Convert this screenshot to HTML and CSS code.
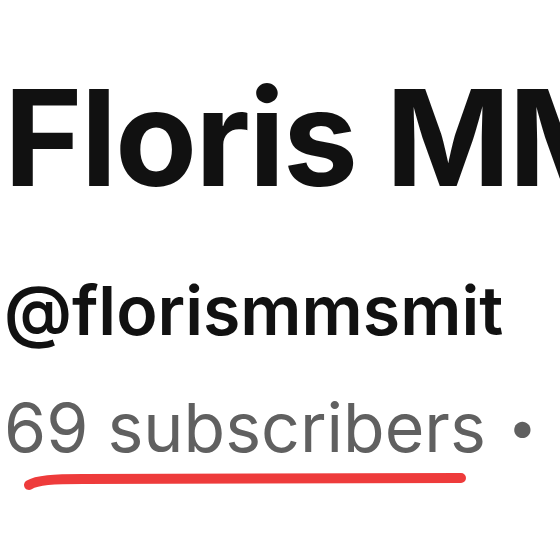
FILE: index.html
```html
<!DOCTYPE html>
<html>
<head>
<meta charset="utf-8">
<link rel="stylesheet" href="styles.css">
</head>
<body>
<div class="header">
  <h1 class="name">Floris MMS Smit</h1>
  <div class="handle">@florismmsmit</div>
  <div class="meta">
    <span class="subs">69 subscribers<svg class="underline" viewBox="0 0 450 20" width="450" height="20"><path d="M6 13 C 14 8, 30 7, 60 7 L 438 6" stroke="#ee3b3b" stroke-width="10" stroke-linecap="round" fill="none"/></svg></span>
    <span class="dot">•</span>
    <span class="videos">1 video</span>
  </div>
</div>
</body>
</html>
```
FILE: styles.css
```css
html, body {
  margin: 0;
  padding: 0;
  background: #fff;
  overflow: hidden;
}
.header {
  width: 560px;
  height: 560px;
  overflow: hidden;
  padding: 0 0 0 4px;
  box-sizing: border-box;
  font-family: Inter, "Liberation Sans", sans-serif;
}
.name {
  margin: 0;
  padding-top: 62px;
  font-size: 134px;
  font-weight: 700;
  line-height: 150px;
  color: #111;
  white-space: nowrap;
  letter-spacing: -2px;
}
.handle {
  margin-top: 58px;
  font-size: 68px;
  font-weight: 600;
  line-height: 80px;
  color: #111;
  white-space: nowrap;
  letter-spacing: 0;
}
.meta {
  margin-top: 37px;
  font-size: 68px;
  font-weight: 400;
  line-height: 80px;
  color: #606060;
  white-space: nowrap;
  display: flex;
  gap: 22px;
}
.subs {
  position: relative;
}
.dot {
  font-size: 52px;
}
.underline {
  position: absolute;
  left: 19px;
  top: 85px;
}
```
